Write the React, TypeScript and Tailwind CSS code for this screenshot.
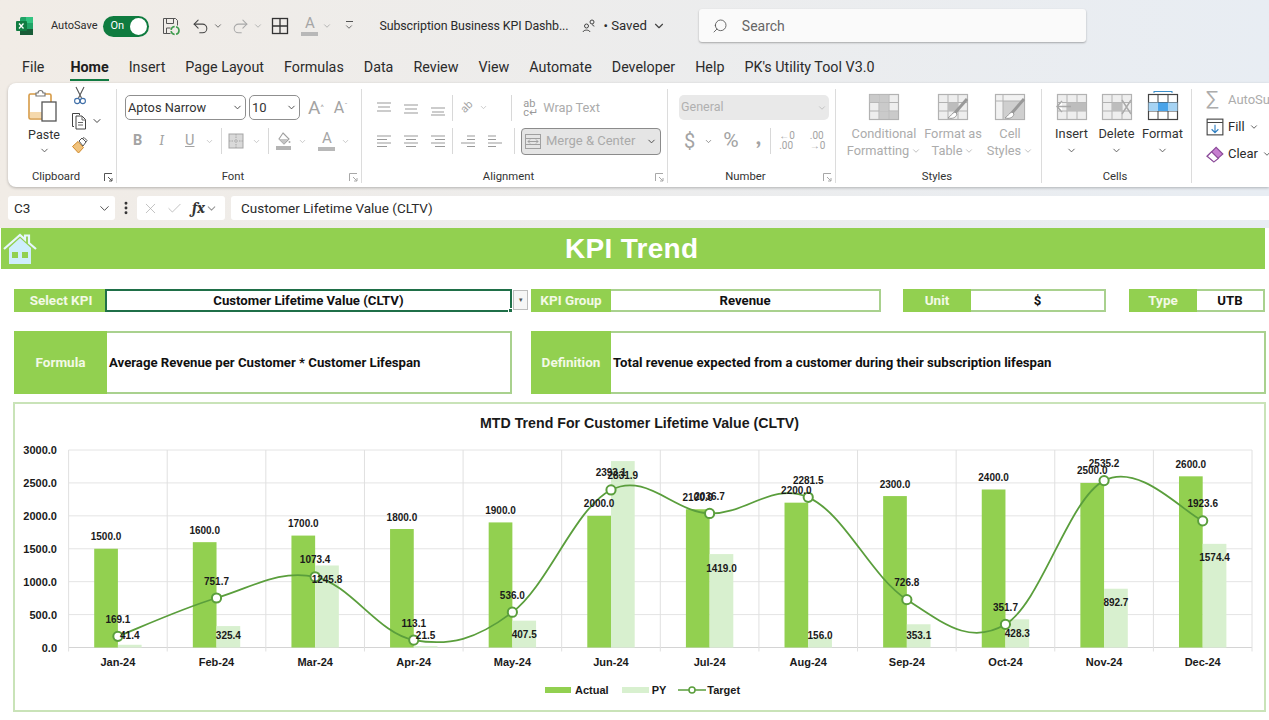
import { ChevronDown, Search, Undo2, Redo2, X, Check, EllipsisVertical } from "lucide-react";

const months = ["Jan-24", "Feb-24", "Mar-24", "Apr-24", "May-24", "Jun-24", "Jul-24", "Aug-24", "Sep-24", "Oct-24", "Nov-24", "Dec-24"];
const actual = [1500, 1600, 1700, 1800, 1900, 2000, 2100, 2200, 2300, 2400, 2500, 2600];
const py = [41.4, 325.4, 1245.8, 21.5, 407.5, 2831.9, 1419, 156, 353.1, 428.3, 892.7, 1574.4];
const target = [169.1, 751.7, 1073.4, 113.1, 536, 2393.1, 2036.7, 2281.5, 726.8, 351.7, 2535.2, 1923.6];

const plotLeft = 68.6;
const plotRight = 1252;
const plotTop = 450;
const plotBottom = 647.5;
const step = (plotRight - plotLeft) / 12;
const barW = 23.7;
const xAt = (i: number) => plotLeft + step * (i + 0.5);
const yAt = (v: number) => plotBottom - (v / 3000) * (plotBottom - plotTop);

function smoothPath() {
  const pts = target.map((v, i) => [xAt(i), yAt(v)]);
  let d = `M${pts[0][0]} ${pts[0][1]}`;
  for (let i = 0; i < pts.length - 1; i++) {
    const p0 = pts[Math.max(i - 1, 0)];
    const p1 = pts[i];
    const p2 = pts[i + 1];
    const p3 = pts[Math.min(i + 2, pts.length - 1)];
    const k = 5.5;
    d += ` C${p1[0] + (p2[0] - p0[0]) / k} ${p1[1] + (p2[1] - p0[1]) / k} ${p2[0] - (p3[0] - p1[0]) / k} ${p2[1] - (p3[1] - p1[1]) / k} ${p2[0]} ${p2[1]}`;
  }
  return d;
}

function Chart() {
  return (
    <svg width={1249} height={232} viewBox="15 440 1249 232" className="block" fontFamily="'Liberation Sans', sans-serif" fontWeight={700} fill="#1a1a1a">
      {[0, 500, 1000, 1500, 2000, 2500, 3000].map((v) => (
        <g key={v}>
          <line x1={plotLeft} x2={plotRight} y1={yAt(v)} y2={yAt(v)} stroke={v === 0 ? "#d4d4d4" : "#e4e4e4"} strokeWidth={1} />
          <text x={57} y={yAt(v) + 4} textAnchor="end" fontSize={11}>{v.toFixed(1)}</text>
        </g>
      ))}
      {Array.from({ length: 13 }).map((_, i) => (
        <line key={i} x1={plotLeft + step * i} x2={plotLeft + step * i} y1={plotTop} y2={plotBottom + 4} stroke="#e0e0e0" strokeWidth={1} />
      ))}
      {months.map((m, i) => (
        <g key={m}>
          <rect x={xAt(i) - barW} y={yAt(actual[i])} width={barW} height={plotBottom - yAt(actual[i])} fill="#92d050" />
          <rect x={xAt(i)} y={yAt(py[i])} width={barW} height={plotBottom - yAt(py[i])} fill="#d8f0cf" />
          <text x={xAt(i)} y={666} textAnchor="middle" fontSize={11}>{m}</text>
        </g>
      ))}
      <path d={smoothPath()} fill="none" stroke="#5a9e3c" strokeWidth={1.8} />
      {months.map((m, i) => (
        <circle key={m} cx={xAt(i)} cy={yAt(target[i])} r={4.6} fill="#fff" stroke="#5a9e3c" strokeWidth={2} />
      ))}
      {months.map((m, i) => (
        <g key={m} fontSize={10}>
          <text x={xAt(i) - barW / 2} y={yAt(actual[i]) - 8.5} textAnchor="middle">{actual[i].toFixed(1)}</text>
          <text x={xAt(i) + barW / 2} y={Math.min(yAt(py[i]) + 17.5, 638.5)} textAnchor="middle">{py[i].toFixed(1)}</text>
          <text x={xAt(i)} y={yAt(target[i]) - 13.5} textAnchor="middle">{target[i].toFixed(1)}</text>
        </g>
      ))}
    </svg>
  );
}

function ExcelLogo() {
  return (
    <svg width={18} height={20} viewBox="0 0 18 20">
      <rect x={4} y={1} width={13} height={18} rx={1.5} fill="#21a366" />
      <rect x={10} y={1} width={7} height={6} fill="#33c481" />
      <rect x={4} y={13} width={13} height={6} fill="#185c37" />
      <rect x={0} y={5} width={11} height={10} rx={1} fill="#107c41" />
      <path d="M3 7.5l4.5 5M7.5 7.5l-4.5 5" stroke="#fff" strokeWidth={1.3} />
    </svg>
  );
}

function SaveIcon() {
  return (
    <svg width={20} height={20} viewBox="0 0 20 20" fill="none" stroke="#555" strokeWidth={1}>
      <path d="M2.5 2.5h12l2 2v5M2.5 2.5v15h7" />
      <path d="M5.5 2.5v5h7v-5M5.5 17v-5h4" />
      <circle cx={14} cy={14.5} r={4} stroke="#3c9a4b" strokeWidth={1.6} strokeDasharray="5 1.5" />
    </svg>
  );
}

function GridIcon() {
  return (
    <svg width={18} height={18} viewBox="0 0 18 18" fill="none" stroke="#333" strokeWidth={1.3}>
      <rect x={1.5} y={1.5} width={15} height={15} />
      <path d="M9 1.5v15M1.5 9h15" />
    </svg>
  );
}

function ColorA({ bar = "#b8b8b8", size = 14 }: { bar?: string; size?: number }) {
  return (
    <span className="flex flex-col items-center text-[#a5a5a5] leading-none" style={{ fontSize: size }}>
      <span className="leading-none">A</span>
      <span className="mt-[1px] h-[4px] w-[17px]" style={{ background: bar }} />
    </span>
  );
}

function Person() {
  return (
    <svg width={16} height={16} viewBox="0 0 16 16" fill="none" stroke="#444" strokeWidth={1}>
      <circle cx={5.5} cy={8} r={2} />
      <path d="M2 14c.5-2.5 6.5-2.5 7 0" />
      <circle cx={11} cy={4} r={2} />
      <path d="M13 8.5c0-1-.8-1.6-2-1.6" />
    </svg>
  );
}

function Chev({ c = "#777", s = 12 }: { c?: string; s?: number }) {
  return <ChevronDown size={s} color={c} strokeWidth={2} className="shrink-0" />;
}

function PasteIcon() {
  return (
    <svg width={34} height={34} viewBox="0 0 34 34" fill="none">
      <rect x={2} y={5} width={22} height={25} rx={1.5} fill="#fff" stroke="#d69a45" strokeWidth={1.6} />
      <rect x={3} y={23} width={20} height={6} fill="#f5d9ad" />
      <path d="M9 7V4h2a2.5 2.5 0 0 1 5 0h2v3z" fill="#fff" stroke="#777" strokeWidth={1.2} />
      <rect x={15} y={13} width={14} height={19} fill="#fff" stroke="#555" strokeWidth={1.3} />
    </svg>
  );
}

function ScissorsIcon() {
  return (
    <svg width={14} height={19} viewBox="0 0 14 19" fill="none" strokeWidth={1.1}>
      <path d="M3 1l5.5 11M11 1L5.5 12" stroke="#555" />
      <circle cx={4.2} cy={15} r={2.6} stroke="#3f6fa8" />
      <circle cx={9.8} cy={15} r={2.6} stroke="#3f6fa8" />
    </svg>
  );
}

function CopyIcon() {
  return (
    <svg width={18} height={18} viewBox="0 0 18 18" fill="none" stroke="#444" strokeWidth={1}>
      <path d="M3 14.5H1.5v-13h7V3" />
      <path d="M5 4h6l3.5 3.5v9.5H5z" />
      <path d="M11 4v4h3.5M7 10.5h5M7 13h5" stroke="#666" />
    </svg>
  );
}

function BrushIcon() {
  return (
    <svg width={18} height={18} viewBox="0 0 18 18" fill="none">
      <path d="M1.5 10.5l5.5-5 5.5 6-5 5.5z" fill="#f0c27c" stroke="#d08a2c" />
      <path d="M8 5l3-3 4 4-3 4z" fill="#fff" stroke="#555" />
      <path d="M11 3l2-1.5 3 3-1.5 2" stroke="#555" />
    </svg>
  );
}

function Lines({ a, c = "#9a9a9a" }: { a: number[][]; c?: string }) {
  return (
    <svg width={16} height={16} viewBox="0 0 16 16" stroke={c} strokeWidth={1.1} className="shrink-0">
      {a.map(([x1, x2, y], i) => (
        <line key={i} x1={x1} x2={x2} y1={y} y2={y} />
      ))}
    </svg>
  );
}

function BorderIcon() {
  return (
    <svg width={18} height={18} viewBox="0 0 18 18" fill="#d9d9d9" stroke="#a5a5a5" strokeWidth={1}>
      <rect x={2} y={2} width={14} height={14} />
      <path d="M9 2v14M2 9h14" fill="none" strokeDasharray="1.5 1" />
    </svg>
  );
}

function FillIcon() {
  return (
    <svg width={20} height={20} viewBox="0 0 20 20" fill="none">
      <path d="M9 2l6 6-5 5-5-5z" stroke="#a0a0a0" strokeWidth={1.1} />
      <path d="M5 8h9l-4 5z" fill="#c4c4c4" />
      <circle cx={15.5} cy={11} r={1} fill="#a8a8a8" />
      <rect x={2} y={15} width={15} height={4} fill="#b4b4b4" />
    </svg>
  );
}

function TableIcon({ mode }: { mode: "cond" | "fmt" | "cell" | "ins" | "del" | "format" }) {
  const on = mode === "format";
  const line = on ? "#444" : "#b2b2b2";
  return (
    <svg width={32} height={32} viewBox="0 0 32 32" fill="none">
      {mode !== "cell" && (
        <>
          <rect x={1.5} y={3.5} width={29} height={25} fill={on ? "#fff" : "#eeeeee"} stroke={line} strokeWidth={1.2} />
          <path d="M11 3.5v25M21 3.5v25M1.5 11.5h29M1.5 20h29" stroke={line} strokeWidth={1} />
        </>
      )}
      {mode === "cond" && <path d="M11 3.5h10v8H11zM11 11.5h10v8H11zM1.5 3.5h9v8h-9zM11 20h19v8H11z" fill="#c0c0c0" opacity={0.8} />}
      {mode === "fmt" && (
        <>
          <rect x={11} y={11.5} width={10} height={8.5} fill="#bdbdbd" />
          <path d="M30 8L17 23" stroke="#999" strokeWidth={3} />
          <path d="M18 21c-3 1-4 4-7 6 4 1 8 0 9-4z" fill="#fff" stroke="#999" />
        </>
      )}
      {mode === "cell" && (
        <>
          <rect x={1.5} y={3.5} width={29} height={25} fill="#f2f2f2" stroke={line} strokeWidth={1.2} />
          <rect x={9} y={10} width={21} height={18} fill="#cfcfcf" />
          <path d="M1.5 10h29M9 3.5v25" stroke={line} />
          <path d="M30 8L17 23" stroke="#999" strokeWidth={3} />
          <path d="M18 21c-3 1-4 4-7 6 4 1 8 0 9-4z" fill="#fff" stroke="#999" />
        </>
      )}
      {mode === "ins" && (
        <>
          <rect x={11} y={11.5} width={19} height={8.5} fill="#bdbdbd" />
          <path d="M15 15.5H1M6 10l-5 5.5L6 21" stroke="#a8a8a8" strokeWidth={1.4} fill="#fff" />
        </>
      )}
      {mode === "del" && (
        <>
          <rect x={11} y={11.5} width={10} height={8.5} fill="#bdbdbd" />
          <path d="M21 9l9 14M30 9l-9 14" stroke="#aaa" strokeWidth={1.4} />
        </>
      )}
      {mode === "format" && (
        <>
          <rect x={11} y={11.5} width={10} height={8.5} fill="#4aa3e8" />
          <rect x={1.5} y={11.5} width={9.5} height={8.5} fill="#a6d3f3" />
          <rect x={21} y={11.5} width={9.5} height={8.5} fill="#a6d3f3" />
          <path d="M7 .5h18M7 0v2M25 0v2" stroke="#3a8dc8" strokeWidth={1} />
        </>
      )}
    </svg>
  );
}

function Launcher({ c = "#a8a8a8" }: { c?: string }) {
  return (
    <svg width={9} height={9} viewBox="0 0 9 9" fill="none" stroke={c} strokeWidth={1} className="shrink-0">
      <path d="M.5 8V.5H8M4 4l4 4M8 5v3H5" />
    </svg>
  );
}

function Sep({ h = "h-[26px]" }: { h?: string }) {
  return <span className={`block w-px shrink-0 bg-[#d8d8d8] ${h}`} />;
}

function Group({ w, label, launcher, launcherColor, children }: { w: string; label: string; launcher?: boolean; launcherColor?: string; children: React.ReactNode }) {
  return (
    <div className={`flex h-[94px] shrink-0 flex-col border-r border-[#dcdcdc] ${w}`}>
      <div className="min-h-0 flex-1">{children}</div>
      <div className="flex h-[16px] items-center pr-[3px] pt-[5px]">
        <span className="flex-1 text-center text-[11.3px] text-[#333]">{label}</span>
        {launcher && <Launcher c={launcherColor} />}
      </div>
    </div>
  );
}

function BigButton({ mode, l1, l2, dim, w }: { mode: "cond" | "fmt" | "cell" | "ins" | "del" | "format"; l1: string; l2?: string; dim?: boolean; w: string }) {
  return (
    <div className={`flex flex-col items-center ${w}`}>
      <TableIcon mode={mode} />
      <span className={`mt-[2px] text-[12.8px] leading-[17px] ${dim ? "text-[#acacac]" : "text-[#333]"}`}>{l1}</span>
      {l2 ? (
        <span className="flex items-center gap-[2px] text-[12.8px] leading-[17px] text-[#acacac]">
          {l2}
          <Chev c="#b5b5b5" s={10} />
        </span>
      ) : (
        <span className="mt-[1px] flex h-[15px] items-center">
          <Chev c="#555" s={11} />
        </span>
      )}
    </div>
  );
}

function Label({ w, children, className = "" }: { w: string; children: React.ReactNode; className?: string }) {
  return <div className={`flex shrink-0 items-center justify-center bg-[#92d050] text-[13.5px] font-bold text-[#f3f9e6] ${w} ${className}`}>{children}</div>;
}

function Value({ w, children, left }: { w: string; children: React.ReactNode; left?: boolean }) {
  return (
    <div className={`flex shrink-0 items-center border-2 border-l-0 border-[#a9d18e] bg-white text-[13.2px] font-bold text-[#111] ${left ? "pl-[2px]" : "justify-center"} ${w}`}>
      {children}
    </div>
  );
}

export default function App() {
  return (
    <div className="h-[720px] w-[1269px] overflow-hidden bg-gradient-to-r from-[#f1ece6] to-[#e8edf3] font-['Roboto',sans-serif] text-[#2b2b2b]">
      {/* title bar */}
      <div className="flex h-[52px] items-center pl-[16px]">
        <ExcelLogo />
        <span className="ml-[17px] text-[11px]">AutoSave</span>
        <span className="ml-[6px] flex h-[21px] w-[46px] items-center justify-between rounded-full bg-[#0f7b3f] pl-[7px] pr-[2px] text-[11px] text-white">
          On
          <span className="h-[17px] w-[17px] rounded-full bg-white" />
        </span>
        <span className="ml-[12px]"><SaveIcon /></span>
        <Undo2 size={19} className="ml-[10px]" color="#444" strokeWidth={1.3} />
        <span className="ml-[3px]"><Chev c="#555" s={10} /></span>
        <Redo2 size={19} className="ml-[8px]" color="#a8a8a8" strokeWidth={1.3} />
        <span className="ml-[3px]"><Chev c="#aaa" s={10} /></span>
        <span className="ml-[8px]"><GridIcon /></span>
        <span className="ml-[12px]"><ColorA size={15} /></span>
        <span className="ml-[4px]"><Chev c="#aaa" s={10} /></span>
        <span className="ml-[12px] flex flex-col items-center">
          <span className="h-px w-[7px] bg-[#555]" />
          <Chev c="#555" s={10} />
        </span>
        <span className="ml-[25px] text-[12.4px] tracking-[-0.1px]">Subscription Business KPI Dashb...</span>
        <span className="ml-[13px]"><Person /></span>
        <span className="ml-[6px] text-[13.2px]">• Saved</span>
        <ChevronDown size={14} className="ml-[5px]" color="#444" />
        <div className="-mt-[1px] ml-[33px] flex h-[33px] w-[387px] items-center rounded-[3px] bg-[#fafafa] pl-[13px] shadow-[0_1px_2px_rgba(0,0,0,0.3)]">
          <Search size={16} color="#555" strokeWidth={1.3} className="-scale-x-100" />
          <span className="ml-[14px] pt-[1px] text-[14px] text-[#666]">Search</span>
        </div>
      </div>

      {/* tabs */}
      <div className="flex h-[31px] items-center gap-[20px] pl-[22px] text-[14.3px]">
        <span className="mr-[6px]">File</span>
        <span className="relative font-bold text-[#1e1e1e]">
          Home
          <span className="absolute -bottom-[3px] left-0 right-0 h-[2px] bg-[#117a42]" />
        </span>
        {["Insert", "Page Layout", "Formulas", "Data", "Review", "View", "Automate", "Developer", "Help", "PK's Utility Tool V3.0"].map((t) => (
          <span key={t}>{t}</span>
        ))}
      </div>

      {/* ribbon */}
      <div className="ml-[8px] flex h-[104px] items-start overflow-hidden rounded-l-[8px] bg-white pt-[6px] shadow-[0_1px_3px_rgba(0,0,0,0.25)]">
        <Group w="w-[109px]" label="Clipboard" launcher launcherColor="#555">
          <div className="flex pl-[19px]">
            <div className="flex w-[34px] flex-col items-center">
              <PasteIcon />
              <span className="mt-[3px] text-[12.5px] leading-[17px] text-[#333]">Paste</span>
              <span className="mt-[2px]"><Chev c="#555" s={11} /></span>
            </div>
            <div className="ml-[10px] flex flex-col items-start">
              <span className="ml-[2px] -mt-[3px]"><ScissorsIcon /></span>
              <span className="mt-[7px] flex items-center gap-[2px]"><CopyIcon /><Chev c="#444" s={12} /></span>
              <span className="mt-[6px]"><BrushIcon /></span>
            </div>
          </div>
        </Group>
        <Group w="w-[245px]" label="Font" launcher>
          <div className="pl-[8px] pt-[6px]">
            <div className="flex items-center">
              <span className="flex h-[25px] w-[121px] items-center justify-between rounded-[5px] border border-[#8f8f8f] px-[2px] text-[12.8px] text-[#333]">Aptos Narrow<Chev c="#444" s={11} /></span>
              <span className="ml-[3px] flex h-[25px] w-[51px] items-center justify-between rounded-[5px] border border-[#8f8f8f] px-[2px] text-[13px] text-[#333]">10<Chev c="#444" s={11} /></span>
              <span className="ml-[8px] text-[19px] leading-none text-[#a3a3a3]">A<sup className="text-[8px]">^</sup></span>
              <span className="ml-[10px] text-[16px] leading-none text-[#a3a3a3]">A<sup className="text-[8px]">ˇ</sup></span>
            </div>
            <div className="mt-[8px] flex h-[26px] items-center pl-[8px] text-[14.5px] text-[#a3a3a3]">
              <span className="font-bold">B</span>
              <span className="ml-[17px] font-serif italic">I</span>
              <span className="ml-[21px] underline">U</span>
              <span className="ml-[11px]"><Chev c="#bbb" s={9} /></span>
              <span className="ml-[7px]"><Sep /></span>
              <span className="ml-[5px]"><BorderIcon /></span>
              <span className="ml-[7px]"><Chev c="#bbb" s={9} /></span>
              <span className="ml-[7px]"><Sep /></span>
              <span className="ml-[5px]"><FillIcon /></span>
              <span className="ml-[4px]"><Chev c="#bbb" s={9} /></span>
              <span className="ml-[11px]"><ColorA size={15} /></span>
              <span className="ml-[6px]"><Chev c="#bbb" s={9} /></span>
            </div>
          </div>
        </Group>
        <Group w="w-[306px]" label="Alignment" launcher>
          <div className="pl-[14px] pt-[6px]">
            <div className="flex h-[25px] items-center gap-[11px]">
              <Lines a={[[1, 15, 3], [2, 14, 7], [1, 15, 11]]} />
              <Lines a={[[1, 15, 5], [2, 14, 9], [1, 15, 13]]} />
              <Lines a={[[1, 15, 8], [2, 14, 12], [1, 15, 15]]} />
              <span className="-ml-[5px]"><Sep /></span>
              <span className="-ml-[3px] flex items-center text-[11px] text-[#a5a5a5]"><span className="-rotate-45">ab</span><span className="ml-[6px]"><Chev c="#bbb" s={9} /></span></span>
              <span className="ml-[12px]"><Sep /></span>
              <span className="flex items-center gap-[4px] text-[12.8px] text-[#acacac]"><span className="w-[16px] text-[11px] leading-[9px] text-[#999]">ab<br />c↵</span>Wrap Text</span>
            </div>
            <div className="mt-[8px] flex h-[26px] items-center gap-[11px]">
              <Lines a={[[1, 15, 3], [1, 11, 6.5], [1, 15, 10], [1, 11, 13.5]]} />
              <Lines a={[[1, 15, 3], [3, 13, 6.5], [1, 15, 10], [3, 13, 13.5]]} />
              <Lines a={[[1, 15, 3], [5, 15, 6.5], [1, 15, 10], [5, 15, 13.5]]} />
              <span className="-ml-[5px]"><Sep /></span>
              <span className="-ml-[4px]"><Lines a={[[7, 15, 3], [7, 15, 6.5], [1, 15, 10], [7, 15, 13.5]]} /></span>
              <Lines a={[[1, 9, 3], [1, 9, 6.5], [1, 15, 10], [1, 9, 13.5]]} />
              <Sep />
              <span className="-ml-[5px] flex h-[27px] w-[140px] items-center justify-between rounded-[4px] border border-[#8b8b8b] bg-[#e5e5e5] px-[3px] text-[13px] text-[#aaa]">
                <span className="flex items-center gap-[5px]">
                  <svg width={16} height={15} viewBox="0 0 16 15" fill="none" stroke="#a0a0a0"><rect x={.5} y={.5} width={15} height={14} /><path d="M.5 4.5h15M.5 10.5h15M3 7.5h10M3 7.5l2-2M3 7.5l2 2M13 7.5l-2-2M13 7.5l-2 2" /></svg>
                  Merge &amp; Center
                </span>
                <Chev c="#444" s={11} />
              </span>
            </div>
          </div>
        </Group>
        <Group w="w-[168px]" label="Number" launcher>
          <div className="pl-[11px] pt-[6px]">
            <span className="flex h-[25px] w-[150px] items-center justify-between rounded-[5px] bg-[#e9e9e9] px-[2px] text-[12.5px] text-[#b0b0b0]">General<Chev c="#bbb" s={10} /></span>
            <div className="mt-[8px] flex h-[26px] items-center pl-[5px] text-[#a3a3a3]">
              <span className="text-[20px]">$</span>
              <span className="ml-[9px]"><Chev c="#777" s={9} /></span>
              <span className="ml-[10px] text-[21px]">%</span>
              <span className="ml-[17px] -mt-[8px] font-serif text-[24px] font-bold leading-none">,</span>
              <span className="ml-[9px]"><Sep /></span>
              <span className="ml-[8px] text-[10px] leading-[10px]">←0<br />.00</span>
              <span className="ml-[15px] text-[10px] leading-[10px]">.00<br />→0</span>
            </div>
          </div>
        </Group>
        <Group w="w-[206px]" label="Styles">
          <div className="flex pl-[10px] pt-[2px]">
            <BigButton mode="cond" l1="Conditional" l2="Formatting" dim w="w-[76px]" />
            <BigButton mode="fmt" l1="Format as" l2="Table" dim w="w-[62px]" />
            <BigButton mode="cell" l1="Cell" l2="Styles" dim w="w-[52px]" />
          </div>
        </Group>
        <Group w="w-[150px]" label="Cells">
          <div className="flex pl-[7px] pt-[2px]">
            <BigButton mode="ins" l1="Insert" w="w-[45px]" />
            <BigButton mode="del" l1="Delete" w="w-[45px]" />
            <BigButton mode="format" l1="Format" w="w-[47px]" />
          </div>
        </Group>
        <div className="flex flex-col gap-[8px] pl-[14px] pt-[1px] text-[13px]">
          <span className="flex h-[19px] items-center gap-[6px] text-[#acacac]"><span className="w-[16px] text-[21px] leading-none">∑</span>AutoSum</span>
          <span className="flex h-[19px] items-center gap-[4px]">
            <svg width={18} height={18} viewBox="0 0 16 16" fill="none" stroke="#444"><rect x={1} y={1} width={14} height={14} /><path d="M1 4h14" /><path d="M8 6v7M5 10l3 3 3-3" stroke="#2f7fc2" /></svg>
            Fill<Chev c="#444" s={10} />
          </span>
          <span className="flex h-[19px] items-center gap-[4px]">
            <svg width={18} height={18} viewBox="0 0 16 16"><path d="M1 10l8-8 6 6-8 7z" fill="#c77fd0" stroke="#8c4c9a" /><path d="M1 10l4-4 6 6-4 3z" fill="#fff" stroke="#8c4c9a" /></svg>
            Clear<Chev c="#444" s={10} />
          </span>
        </div>
      </div>

      {/* formula bar */}
      <div className="flex h-[41px] items-start pl-[8px] pt-[9px]">
        <span className="flex h-[24px] w-[107px] items-center justify-between rounded-[3px] bg-white pl-[6px] pr-[3px] pt-[1px] text-[13.5px]">C3<ChevronDown size={15} color="#444" strokeWidth={1.5} /></span>
        <EllipsisVertical size={16} color="#333" className="ml-[3px] mt-[4px]" strokeWidth={2.4} />
        <span className="ml-[3px] flex h-[24px] w-[88px] items-center rounded-[3px] bg-white pl-[5px] text-[#aaa]">
          <X size={17} strokeWidth={1} />
          <Check size={17} strokeWidth={1} className="ml-[7px]" />
          <span className="ml-[9px] font-serif text-[16px] font-bold italic text-[#333]">fx</span>
          <Chev c="#999" s={13} />
        </span>
        <span className="ml-[6px] flex h-[24px] flex-1 items-center rounded-l-[3px] bg-white pl-[10px] pt-[1px] text-[13.5px]">Customer Lifetime Value (CLTV)</span>
      </div>

      {/* sheet */}
      <div className="h-[492px] bg-white pl-[1px]">
        <div className="flex h-[41px] w-[1264px] items-center bg-[#92d050] pl-[2px]">
          <svg width={34} height={32} viewBox="0 0 34 32">
            <path d="M6 15v16h22V15L17 5z" fill="#cfeefc" />
            <rect x={9} y={19} width={6} height={6} fill="#92d050" />
            <rect x={19} y={19} width={6} height={6} fill="#92d050" />
            <path d="M1 16L17 2l5 4.5V2.5h4v7.5L33 16" fill="none" stroke="#e6f7fd" strokeWidth={2.2} />
          </svg>
          <span className="ml-[528px] font-['Liberation_Sans',sans-serif] text-[28px] font-bold tracking-[0.3px] text-white">KPI Trend</span>
        </div>

        <div className="ml-[13px] mt-[20px] flex h-[23px]">
          <Label w="w-[91px]" className="pl-[3px]">Select KPI</Label>
          <div className="relative flex w-[407px] shrink-0 items-center justify-center border-2 border-[#1f6f48] bg-white text-[13.2px] font-bold text-[#111]">
            Customer Lifetime Value (CLTV)
            <span className="absolute -bottom-[3px] -right-[3px] h-[5px] w-[5px] border border-white bg-[#1f6f48]" />
          </div>
          <span className="ml-[1px] mt-[1px] flex h-[20px] w-[15px] items-center justify-center border border-[#bdbdbd] bg-[#f6f6f6] text-[7px] text-[#555]">▾</span>
          <Label w="w-[80px]" className="ml-[3px]">KPI Group</Label>
          <Value w="w-[270px]">Revenue</Value>
          <Label w="w-[68px]" className="ml-[22px]">Unit</Label>
          <Value w="w-[135px]">$</Value>
          <Label w="w-[68px]" className="ml-[23px]">Type</Label>
          <Value w="w-[68px]">UTB</Value>
        </div>

        <div className="ml-[13px] mt-[19px] flex h-[63px]">
          <Label w="w-[93px]">Formula</Label>
          <Value w="w-[405px]" left>Average Revenue per Customer * Customer Lifespan</Value>
          <Label w="w-[80px]" className="ml-[19px]">Definition</Label>
          <Value w="w-[655px]" left>Total revenue expected from a customer during their subscription lifespan</Value>
        </div>

        <div className="ml-[12px] mt-[8px] h-[310px] w-[1253px] border-2 border-[#c9e3b8] bg-white">
          <div className="h-[36px] pt-[9px] text-center font-['Liberation_Sans',sans-serif] text-[14.2px] font-bold leading-[20px] text-[#1a1a1a]">MTD Trend For Customer Lifetime Value (CLTV)</div>
          <Chart />
          <div className="mt-[10px] flex items-center pl-[530px] font-['Liberation_Sans',sans-serif] text-[11px] font-bold text-[#1a1a1a]">
            <span className="h-[6px] w-[26px] bg-[#92d050]" />
            <span className="ml-[4px]">Actual</span>
            <span className="ml-[13px] h-[6px] w-[27px] bg-[#d8f0cf]" />
            <span className="ml-[3px]">PY</span>
            <svg width={28} height={10} viewBox="0 0 28 10" className="ml-[12px]">
              <path d="M0 5h28" stroke="#5a9e3c" strokeWidth={1.5} />
              <circle cx={14} cy={5} r={3} fill="#fff" stroke="#5a9e3c" strokeWidth={1.5} />
            </svg>
            <span className="ml-[1px]">Target</span>
          </div>
        </div>
      </div>
    </div>
  );
}
